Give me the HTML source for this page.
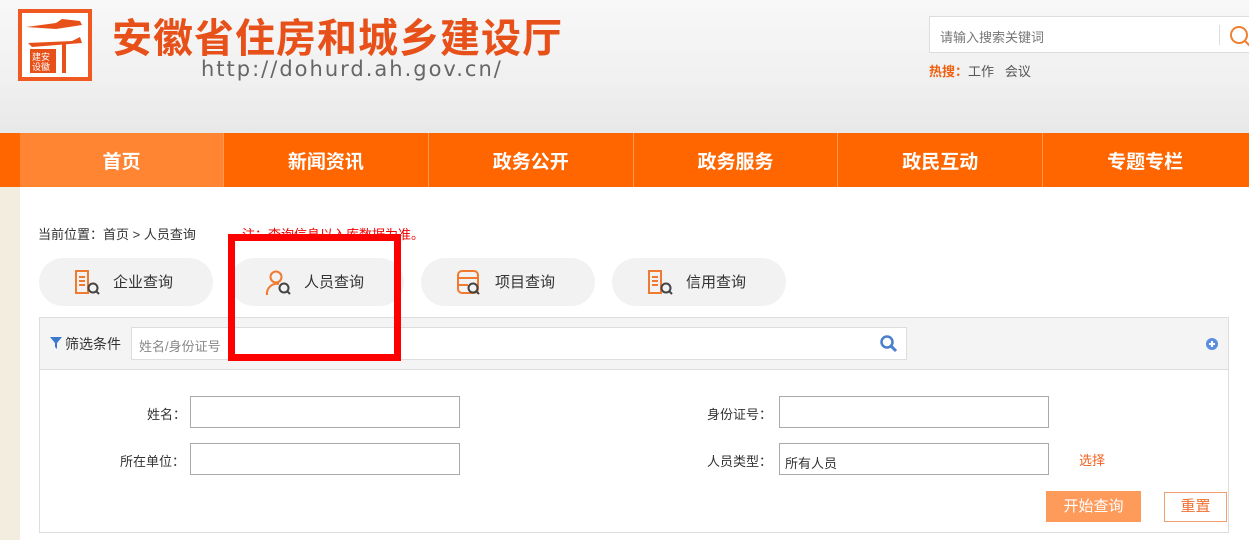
<!DOCTYPE html>
<html><head><meta charset="utf-8"><style>
*{margin:0;padding:0;box-sizing:border-box}
body{width:1249px;height:540px;overflow:hidden;font-family:"Liberation Sans","Noto Sans CJK SC",sans-serif;font-size:13px;color:#333;background:#f3ede0;position:relative}
.hdr{position:absolute;left:0;top:0;width:1249px;height:133px;background:linear-gradient(#f8f8f8,#f0f0f0 60%,#e8e8e8)}
.logo{position:absolute;left:18px;top:9px;width:74px;height:72px;border:4px solid #f05a22;background:#fff}
.title{position:absolute;left:112px;top:6px;font-size:40px;font-weight:bold;color:#e8501a;letter-spacing:1px;font-family:"Noto Sans CJK SC",sans-serif;white-space:nowrap}
.url{position:absolute;left:201px;top:57px;font-size:21px;color:#666;letter-spacing:2px;font-family:"DejaVu Sans",sans-serif}
.search{position:absolute;left:929px;top:16px;width:330px;height:37px;background:#fff;border:1px solid #ddd}
.search span{position:absolute;left:10px;top:10px;color:#777;font-size:13px}
.hot{position:absolute;left:929px;top:61px;font-size:13px;color:#555}
.nav{position:absolute;left:0;top:133px;width:1249px;height:54px;background:#ff6600;display:flex}
.nav div{width:204.8px;text-align:center;line-height:54px;padding-top:3px;color:#fff;font-size:19px;font-weight:bold;border-left:1px solid #ff9a55}
.nav div:first-child{background:#ff8533;margin-left:20px;width:203px;border:none}
.main{position:absolute;left:20px;top:187px;width:1229px;height:353px;background:#fff}
.crumb{position:absolute;left:18px;top:37px;font-size:13px;color:#333}
.note{position:absolute;left:222px;top:37px;color:#e00;font-size:13px}
.pill{position:absolute;top:71px;width:174px;height:48px;border-radius:24px;background:#f2f2f2;font-size:15px;color:#333;line-height:48px}
.pill span{position:absolute;left:74px;top:1px}
.pill svg{position:absolute;left:34px;top:11px}
.box{position:absolute;left:19px;top:130px;width:1190px;height:216px;border:1px solid #ddd}
.fbar{height:52px;background:#f4f4f4;border-bottom:1px solid #ddd;position:relative}
.lbl{position:absolute;font-size:13px;color:#333}
.inp{position:absolute;width:270px;height:32px;border:1px solid #aaa;background:#fff}
.red{position:absolute;left:228px;top:234px;width:173px;height:127px;border:7px solid #f00}
</style></head><body>
<div class="hdr">
<div class="logo">
<svg width="66" height="64" viewBox="0 0 66 64"><path d="M4 14 L34 10 L40 6 L58 8 L60 12 L34 16 Z M6 30 L50 28 L58 24 L60 30 L10 34Z" fill="#e8501a"/><rect x="40" y="30" width="4" height="30" fill="#e8501a"/><rect x="8" y="36" width="26" height="24" fill="#e8501a"/><text x="10" y="47" font-size="9" fill="#fff">建安</text><text x="10" y="57" font-size="9" fill="#fff">设徽</text></svg>
</div>
<div class="title">安徽省住房和城乡建设厅</div>
<div class="url">http://dohurd.ah.gov.cn/</div>
<div class="search"><span>请输入搜索关键词</span><div style="position:absolute;left:289px;top:8px;width:1px;height:20px;background:#ddd"></div><svg style="position:absolute;left:297px;top:7px" width="24" height="24"><circle cx="12" cy="11" r="8" fill="none" stroke="#f08030" stroke-width="2"/><path d="M18 17l5 5" stroke="#f08030" stroke-width="2"/></svg></div>
<div class="hot"><b style="color:#f06010">热搜：</b>工作 &nbsp; 会议</div>
</div>
<div class="nav"><div>首页</div><div>新闻资讯</div><div>政务公开</div><div>政务服务</div><div>政民互动</div><div>专题专栏</div></div>
<div class="main">
<div class="crumb">当前位置：首页 &gt; 人员查询</div>
<div class="note">注：查询信息以入库数据为准。</div>
<div class="pill" style="left:19px"><svg width="28" height="28"><rect x="3" y="2" width="12" height="22" fill="none" stroke="#f07a30" stroke-width="2"/><path d="M6 8h6M6 12h6M6 16h6" stroke="#f07a30" stroke-width="2"/><circle cx="20" cy="19" r="4.5" fill="none" stroke="#444" stroke-width="2"/><path d="M23 22l3 3" stroke="#444" stroke-width="2"/></svg><span>企业查询</span></div>
<div class="pill" style="left:210px"><svg width="28" height="28"><circle cx="12" cy="8" r="5.5" fill="none" stroke="#f07a30" stroke-width="2"/><path d="M3 26a10 10 0 0 1 12-11" fill="none" stroke="#f07a30" stroke-width="2"/><circle cx="20" cy="19" r="4.5" fill="none" stroke="#444" stroke-width="2"/><path d="M23 22l3 3" stroke="#444" stroke-width="2"/></svg><span>人员查询</span></div>
<div class="pill" style="left:401px"><svg width="28" height="28"><rect x="3" y="2" width="20" height="22" rx="4" fill="none" stroke="#f07a30" stroke-width="2"/><path d="M3 9h20M3 16h10" stroke="#f07a30" stroke-width="2"/><circle cx="18" cy="19" r="4.5" fill="#f2f2f2" stroke="#444" stroke-width="2"/><path d="M21 22l3 3" stroke="#444" stroke-width="2"/></svg><span>项目查询</span></div>
<div class="pill" style="left:592px"><svg width="28" height="28"><rect x="3" y="2" width="12" height="22" fill="none" stroke="#f07a30" stroke-width="2"/><path d="M6 8h6M6 12h6M6 16h6" stroke="#f07a30" stroke-width="2"/><circle cx="20" cy="19" r="4.5" fill="none" stroke="#444" stroke-width="2"/><path d="M23 22l3 3" stroke="#444" stroke-width="2"/></svg><span>信用查询</span></div>
<div class="box">
<div class="fbar">
<svg style="position:absolute;left:10px;top:19px" width="12" height="12"><path d="M0 0h12L7 6v6L5 10V6Z" fill="#3a78d0"/></svg>
<div class="lbl" style="left:25px;top:16px;font-size:14px">筛选条件</div>
<div style="position:absolute;left:91px;top:9px;width:776px;height:33px;background:#fff;border:1px solid #ddd"><span style="position:absolute;left:7px;top:8px;color:#888">姓名/身份证号</span><svg style="position:absolute;left:747px;top:6px" width="20" height="20"><circle cx="8" cy="8" r="5.5" fill="none" stroke="#4a7fd0" stroke-width="2.5"/><path d="M12 12l5 5" stroke="#4a7fd0" stroke-width="3"/></svg></div>
<svg style="position:absolute;left:1165px;top:19px" width="14" height="14"><circle cx="7" cy="7" r="6" fill="#5b8ee0"/><path d="M4 7h6M7 4v6" stroke="#fff" stroke-width="2"/></svg>
</div>
<div class="lbl" style="left:107px;top:86px">姓名：</div><div class="inp" style="left:150px;top:78px"></div>
<div class="lbl" style="left:667px;top:86px">身份证号：</div><div class="inp" style="left:739px;top:78px"></div>
<div class="lbl" style="left:80px;top:133px">所在单位：</div><div class="inp" style="left:150px;top:125px"></div>
<div class="lbl" style="left:667px;top:133px">人员类型：</div><div class="inp" style="left:739px;top:125px"><span style="position:absolute;left:5px;top:9px">所有人员</span></div>
<div class="lbl" style="left:1039px;top:132px;color:#f06020">选择</div>
<div style="position:absolute;left:1006px;top:173px;width:95px;height:31px;background:#fe9a5a;color:#fff;font-size:15px;text-align:center;line-height:31px">开始查询</div>
<div style="position:absolute;left:1124px;top:174px;width:63px;height:30px;border:1px solid #f0a070;color:#f07030;font-size:15px;text-align:center;line-height:28px">重置</div>
</div>
</div>
<div class="red"></div>
</body></html>
